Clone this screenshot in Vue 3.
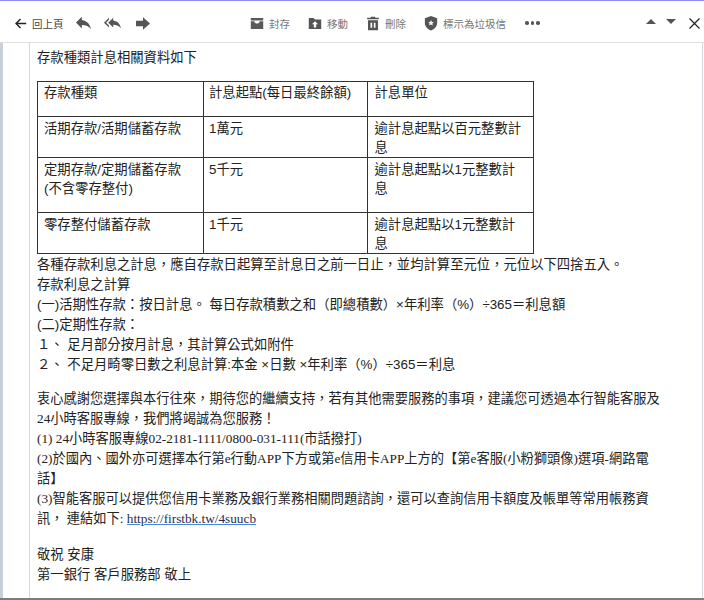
<script setup>
const rows = [
  { a: ['存款種類'], b: '計息起點(每日最終餘額)', c: ['計息單位'], h: 35 },
  { a: ['活期存款/活期儲蓄存款'], b: '1萬元', c: ['逾計息起點以百元整數計', '息'], h: 41 },
  { a: ['定期存款/定期儲蓄存款', '(不含零存整付)'], b: '5千元', c: ['逾計息起點以1元整數計', '息'], h: 55 },
  { a: ['零存整付儲蓄存款'], b: '1千元', c: ['逾計息起點以1元整數計', '息'], h: 41 },
]
</script>

<template>
  <div class="page">
    <header class="toolbar">
      <div class="group left">
        <svg class="ico back" viewBox="0 0 16 16" width="13" height="13"><path d="M15 8H2.500M8 2.500 2.500 8 8 13.500" fill="none" stroke="#222" stroke-width="1.700"/></svg>
        <span class="lbl dark">回上頁</span>
        <svg class="ico reply" viewBox="3 5 18 15" width="15" height="14"><path d="M10 9V5l-7 7 7 7v-4.100c5 0 8.500 1.600 11 5.100-1-5-4-10-11-11z" fill="#555"/></svg>
        <svg class="ico replyall" viewBox="0 5 24 15" width="17" height="14"><path d="M7 8V5l-7 7 7 7v-3l-4-4 4-4zm6 1V5l-7 7 7 7v-4.100c5 0 8.500 1.600 11 5.100-1-5-4-10-11-11z" fill="#555"/></svg>
        <svg class="ico fwd" viewBox="3 4 18 16" width="14" height="13"><path d="M12 4l9 8-9 8v-4.500H3v-7h9z" fill="#555"/></svg>
      </div>
      <div class="group mid">
        <span class="act"><svg viewBox="0 0 18 16" width="14" height="13"><path d="M1 1h16v14H1zM1 4v1h4.500c.5 2 1.800 3 3.500 3s3-1 3.500-3H17V4z" fill="#5a5a5a" fill-rule="evenodd"/></svg><span class="lbl">封存</span></span>
        <span class="act"><svg viewBox="0 0 18 16" width="14" height="13"><path d="M1 1h6l2 2h8v12H1zM9 5l-4 4h2.500v4h3V9H13z" fill="#555" fill-rule="evenodd"/></svg><span class="lbl">移動</span></span>
        <span class="act"><svg viewBox="0 0 16 18" width="14" height="15"><path d="M1 2h4l1-1h4l1 1h4v2H1zM2 5h12v12H2zM5 8v6h2V8zm4 0v6h2V8z" fill="#555" fill-rule="evenodd"/></svg><span class="lbl">刪除</span></span>
        <span class="act"><svg viewBox="0 0 16 18" width="14" height="16"><path d="M8 1l7 2.500V9c0 4-3 7-7 8.500C4 16 1 13 1 9V3.500zM8 5.500l-1 2.300-2.300.2 1.800 1.500-.6 2.300 2.100-1.200 2.100 1.200-.6-2.300 1.800-1.500-2.300-.2z" fill="#555" fill-rule="evenodd"/></svg><span class="lbl">標示為垃圾信</span></span>
        <span class="dots"><i></i><i></i><i></i></span>
      </div>
      <div class="group right">
        <span class="tri up"></span>
        <span class="tri down"></span>
        <svg viewBox="0 0 11 11" width="11" height="11" class="close"><path d="M.5.500l10 10M10.500.500l-10 10" stroke="#222" stroke-width="1.200" fill="none"/></svg>
      </div>
    </header>

    <main class="mail">
      <p class="intro">存款種類計息相關資料如下</p>
      <table class="rates">
        <tbody>
          <tr v-for="(r, i) in rows" :key="i" :style="{ height: r.h + 'px' }">
            <td class="c1"><div v-for="t in r.a" :key="t">{{ t }}</div></td>
            <td class="c2">{{ r.b }}</td>
            <td class="c3"><div v-for="t in r.c" :key="t">{{ t }}</div></td>
          </tr>
        </tbody>
      </table>
      <div class="block first">
        <div>各種存款利息之計息，應自存款日起算至計息日之前一日止，並均計算至元位，元位以下四捨五入。</div>
        <div>存款利息之計算</div>
        <div>(一)活期性存款：按日計息。 每日存款積數之和（即總積數）×年利率（%）÷365＝利息額</div>
        <div>(二)定期性存款：</div>
        <div>１、 足月部分按月計息，其計算公式如附件</div>
        <div>２、 不足月畸零日數之利息計算:本金 ×日數 ×年利率（%）÷365＝利息</div>
      </div>
      <div class="block serif gap1">
        <div>衷心感謝您選擇與本行往來，期待您的繼續支持，若有其他需要服務的事項，建議您可透過本行智能客服及</div>
        <div>24小時客服專線，我們將竭誠為您服務！</div>
        <div>(1) 24小時客服專線02-2181-1111/0800-031-111(市話撥打)</div>
        <div>(2)於國內、國外亦可選擇本行第e行動APP下方或第e信用卡APP上方的【第e客服(小粉獅頭像)選項-網路電</div>
        <div>話】</div>
        <div>(3)智能客服可以提供您信用卡業務及銀行業務相關問題諮詢，還可以查詢信用卡額度及帳單等常用帳務資</div>
        <div>訊， 連結如下: <a href="#" class="link">https://firstbk.tw/4suucb</a></div>
      </div>
      <div class="block gap2">
        <div>敬祝 安康</div>
        <div>第一銀行 客戶服務部 敬上</div>
      </div>
    </main>
  </div>
</template>

<style scoped>
.page {
  width: 704px;
  height: 600px;
  box-sizing: border-box;
  overflow: hidden;
  display: flex;
  flex-direction: column;
  background: #fff;
  border-top: 1px solid #8f8cf0;
  border-bottom: 2px solid #7d7d7d;
  font-family: "Liberation Sans", "Noto Sans CJK TC", sans-serif;
  font-size: 13.333px;
  color: #222;
}
.toolbar {
  flex: none;
  height: 42px;
  box-sizing: border-box;
  padding-top: 3px;
  display: flex;
  align-items: center;
  border-bottom: 1px solid #e0e0e0;
}
.group { display: flex; align-items: center; }
.left { padding-left: 14px; width: 250px; box-sizing: border-box; }
.back { margin-right: 5px; }
.lbl { font-size: 10.500px; color: #777; }
.lbl.dark { color: #444; }
.reply { margin-left: 12px; }
.replyall { margin-left: 13px; }
.fwd { margin-left: 15px; }
.mid { gap: 18px; }
.act { display: flex; align-items: center; gap: 5px; }
.dots { display: flex; gap: 2px; margin-left: 1px; }
.dots i { width: 3.500px; height: 3.500px; border-radius: 50%; background: #555; }
.right { margin-left: auto; padding-right: 4px; }
.tri { width: 0; height: 0; margin-bottom: 4px; border-left: 5px solid transparent; border-right: 5px solid transparent; }
.tri.up { border-bottom: 5px solid #555; margin-right: 10px; }
.tri.down { border-top: 5px solid #555; margin-right: 13px; }
.mail {
  flex: 1;
  border-left: 3px solid #c7d0d8;
  padding-left: 34px;
  background:
    linear-gradient(#d4d8dc, #d4d8dc) 26px 0 / 1px 100% no-repeat,
    linear-gradient(#d4d8dc, #d4d8dc) right 1px top 0 / 1px 100% no-repeat;
  line-height: 20px;
}
.intro { margin: 5px 0 13px; }
.rates {
  border-collapse: collapse;
  table-layout: fixed;
  width: 497px;
  line-height: 19px;
}
.rates td {
  border: 1px solid #333;
  padding: 2px 6px 0;
  vertical-align: top;
  box-sizing: border-box;
}
.rates tr:first-child td { padding-top: 1px; }
.rates td.c2 { padding-left: 5px; }
.rates td.c3 { padding-left: 6.500px; }
.c1 { width: 166px; }
.c2 { width: 164px; }
.block div { white-space: nowrap; }
.first { margin-top: 1px; }
.gap1 { margin-top: 14px; }
.gap2 { margin-top: 16px; }
.serif { font-family: "Liberation Serif", "Noto Sans CJK TC", serif; font-size: 13.250px; }
.link { color: #22304f; text-decoration-color: #4a84dc; }
</style>
<style>
html, body { margin: 0; padding: 0; background: #fff; }
</style>
